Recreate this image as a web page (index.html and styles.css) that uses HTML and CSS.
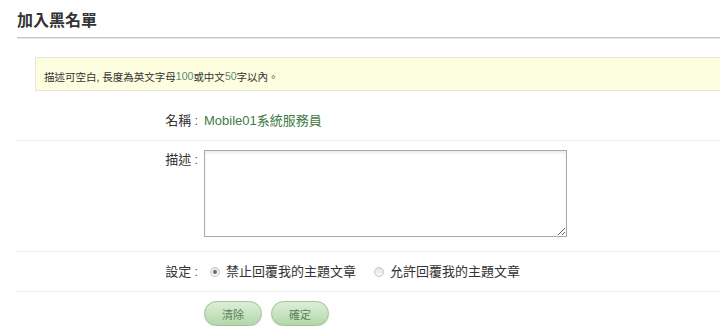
FILE: index.html
```html
<!DOCTYPE html>
<html lang="zh-Hant">
<head>
<meta charset="utf-8">
<title>加入黑名單</title>
<link rel="stylesheet" href="styles.css">
</head>
<body>
<div class="page">
  <h1 class="title">加入黑名單</h1>
  <div class="notice">描述可空白, 長度為英文字母<span class="num">100</span>或中文<span class="num">50</span>字以內。</div>
  <form class="form">
    <div class="row row-name">
      <div class="label">名稱<span class="colon">:</span></div>
      <div class="value name">Mobile01系統服務員</div>
    </div>
    <div class="row row-desc">
      <div class="label label-top">描述<span class="colon">:</span></div>
      <div class="value"><textarea class="desc"></textarea></div>
    </div>
    <div class="row row-set">
      <div class="label">設定<span class="colon">:</span></div>
      <div class="value radios">
        <label class="opt"><input type="radio" name="s" class="radio" checked><span>禁止回覆我的主題文章</span></label>
        <label class="opt"><input type="radio" name="s" class="radio"><span>允許回覆我的主題文章</span></label>
      </div>
    </div>
    <div class="row row-btns">
      <div class="label"></div>
      <div class="value btns">
        <button type="button" class="btn">清除</button>
        <button type="button" class="btn">確定</button>
      </div>
    </div>
  </form>
</div>
</body>
</html>
```

FILE: styles.css
```css
html, body {
  margin: 0;
  padding: 0;
  background: #fff;
  overflow: hidden;
}
body {
  font-family: "Liberation Sans", "Noto Sans CJK TC", sans-serif;
  color: #333;
}
.page {
  padding-left: 17px;
}
.title {
  margin: 0;
  padding: 11px 0 6px;
  font-size: 16px;
  line-height: 20px;
  font-weight: bold;
  color: #333;
  border-bottom: 1px solid #c9c9c9;
  box-shadow: 0 1px 0 #e3e3e3;
}
.notice {
  margin: 19px -2px 0 18px;
  padding: 4px 8px 0;
  display: flex;
  align-items: center;
  box-sizing: border-box;
  height: 34px;
  background: #fdfde0;
  border: 1px solid #e6e6dc;
  font-size: 10.5px;
  color: #333;
}
.num {
  color: #5b8a70;
}
.form {
  margin: 0;
}
.row {
  display: grid;
  grid-template-columns: 181px 1fr;
  column-gap: 6px;
  border-bottom: 1px solid #efefef;
  font-size: 13px;
  line-height: 16px;
}
.row-name {
  padding: 22px 0 11px;
}
.row-desc {
  padding: 9px 0 14px;
}
.row-set {
  padding: 12px 0 11px;
}
.row-btns {
  border-bottom: none;
  padding: 9px 0 0;
}
.label {
  text-align: right;
  color: #333;
}
.label-top {
  padding-top: 2px;
}
.colon {
  margin-left: 3px;
  color: #555;
}
.name {
  color: #3f7a45;
}
.desc {
  display: block;
  margin: 0;
  width: 363px;
  height: 87px;
  box-sizing: border-box;
  border: 1px solid #a9a9a9;
  box-shadow: inset 0 2px 3px rgba(0,0,0,0.08);
  resize: both;
  font: inherit;
}
.radios {
  display: flex;
  align-items: center;
  gap: 12px;
}
.opt {
  display: flex;
  align-items: center;
  gap: 6px;
}
.radio {
  appearance: none;
  -webkit-appearance: none;
  margin: 0 0 0 6px;
  width: 10px;
  height: 10px;
  border-radius: 50%;
  border: 1px solid #c4c4c4;
  background: linear-gradient(#e4e4e4, #f8f8f8);
  box-sizing: border-box;
  position: relative;
}
.radio:checked::after {
  content: "";
  position: absolute;
  left: 2px;
  top: 2px;
  width: 4px;
  height: 4px;
  border-radius: 50%;
  background: #6a6a6a;
}
.btns {
  display: flex;
  gap: 9px;
}
.btn {
  width: 58px;
  height: 25px;
  border-radius: 13px;
  border: 1px solid #9cc396;
  background: linear-gradient(#dcefd7, #b3d7ab);
  box-shadow: 0 1px 1px rgba(0,0,0,0.12);
  color: #5f7f5c;
  font-family: "Liberation Sans", "Noto Sans CJK TC", sans-serif;
  font-size: 11px;
  padding: 0;
  cursor: pointer;
}
```
